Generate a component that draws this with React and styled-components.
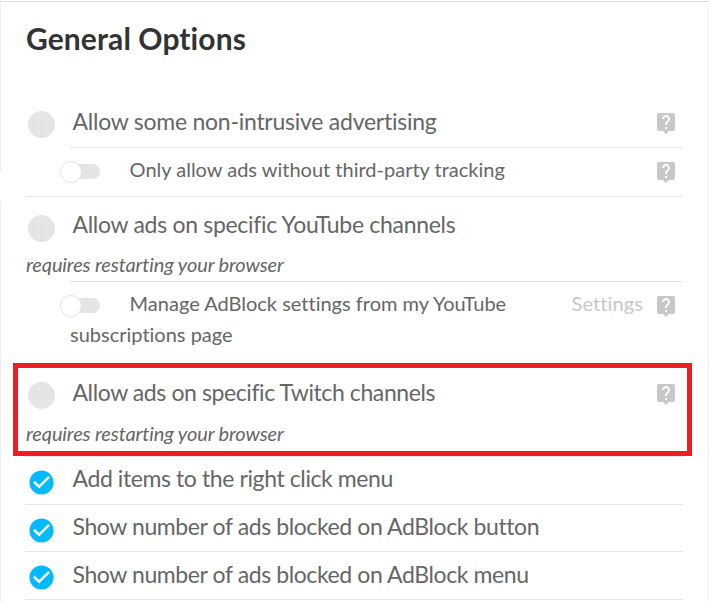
import { useState } from 'react';
import styled, { createGlobalStyle } from 'styled-components';
import { MdCheckCircle, MdLiveHelp } from 'react-icons/md';

const GlobalStyle = createGlobalStyle`
  * {
    box-sizing: border-box;
  }
  body {
    margin: 0;
    background-color: white;
    font-family: Lato, 'Liberation Sans', sans-serif;
    font-variant-ligatures: none;
    color: #666;
  }
`;

const Page = styled.div`
  display: grid;
  grid-template-columns: 1px 1fr 1px;
  width: 709px;
  height: 602px;
  overflow: hidden;
  padding-top: 1px;
`;
const Edge = styled.div`
  display: flex;
  flex-direction: column;
  gap: ${(props) => props.gap || 0};
`;
const EdgePart = styled.div`
  height: ${(props) => props.h || 'auto'};
  flex: ${(props) => (props.h ? 'none' : 1)};
  background-color: #efefef;
`;
const Panel = styled.main`
  border-top: 1px solid #dcdcdc;
  padding: 0 25px;
`;
const Title = styled.h1`
  margin: 0;
  padding-top: 14px;
  height: 95px;
  font-size: 30px;
  line-height: 44px;
  letter-spacing: 0.1px;
  font-weight: 700;
  color: #333;
  white-space: nowrap;
`;
const List = styled.ul`
  margin: 0;
  padding: 0;
  list-style: none;
  border-bottom: 1px solid #e5e5e5;
`;
const Item = styled.li`
  display: flex;
  align-items: flex-start;
  height: ${(props) => props.h};
  padding-top: ${(props) => props.top};
  margin-left: ${(props) => (props.sub ? '44px' : 0)};
  border-top: ${(props) => (props.noLine ? 'none' : '1px solid #e5e5e5')};
`;
const CheckBtn = styled.button`
  display: flex;
  align-items: center;
  justify-content: center;
  flex: none;
  width: 30px;
  height: 30px;
  margin: ${(props) => props.drop || '3px'} 16.5px 0 0;
  padding: 0;
  border: none;
  background: none;
  color: #00b9ff;
  cursor: pointer;
`;
const dots = `radial-gradient(circle at 1px 1px, #dedede 0.5px, transparent 0.9px) 0 0 / 4px 4px`;
const Blank = styled.span`
  width: 27px;
  height: 27px;
  border-radius: 50%;
  background: ${dots}, #e6e6e6;
`;
const Label = styled.div`
  flex: 1;
  font-size: 23px;
  line-height: 30px;
  letter-spacing: ${(props) => props.track || '-0.4px'};
  white-space: nowrap;
`;
const SubLabel = styled.div`
  flex: 1;
  font-size: 20px;
  line-height: 31px;
`;
const Note = styled.div`
  margin-left: -46.5px;
  padding-top: ${(props) => props.top};
  font-size: 20px;
  line-height: 30px;
  letter-spacing: -0.13px;
  font-style: italic;
`;
const Track = styled.button`
  display: inline-flex;
  align-items: center;
  vertical-align: top;
  width: 38px;
  height: 15px;
  margin: 10px 29.6px 0 -8px;
  padding: 0;
  border: none;
  border-radius: 8px;
  background: ${dots}, #e6e6e6;
  cursor: pointer;
`;
const Knob = styled.span`
  flex: none;
  width: 22px;
  height: 22px;
  margin-left: ${(props) => (props.on ? '18px' : '-2px')};
  border: 1px solid #e2e2e2;
  border-radius: 50%;
  background-color: white;
`;
const Settings = styled.span`
  margin-right: 11px;
  font-size: 20px;
  line-height: 31px;
  letter-spacing: 0.1px;
  color: #c8c8c8;
`;
const Help = styled(MdLiveHelp)`
  flex: none;
  width: 24px;
  height: 24px;
  margin: ${(props) => props.$drop || '5px'} 5px 0 0;
  color: #c8c8c8;
`;
// the marker frame is laid over the list and takes no clicks
const Marker = styled.div`
  position: absolute;
  left: 13px;
  top: 363px;
  width: 679px;
  height: 93px;
  border: 5px solid #ee1c25;
  pointer-events: none;
`;

function Check({ start, drop }) {
  let [on, setOn] = useState(start);
  return (
    <CheckBtn drop={drop} onClick={() => setOn(!on)}>
      {on ? <MdCheckCircle size={29} /> : <Blank />}
    </CheckBtn>
  );
}

function Toggle() {
  let [on, setOn] = useState(false);
  return (
    <Track onClick={() => setOn(!on)}>
      <Knob on={on ? 1 : undefined} />
    </Track>
  );
}

const menuItems = [
  { text: 'Add items to the right click menu', h: '48px', top: '6px' },
  { text: 'Show number of ads blocked on AdBlock button', h: '47px', top: '6px' },
  { text: 'Show number of ads blocked on AdBlock menu', h: '48px', top: '7px' },
];

function App() {
  return (
    <>
      <GlobalStyle />
      <Page>
        <Edge gap="29px">
          <EdgePart h="171px" />
          <EdgePart />
        </Edge>
        <Panel>
          <Title>General Options</Title>
          <List>
            <Item noLine h="50px" top="9px">
              <Check />
              <Label track="-0.25px">Allow some non-intrusive advertising</Label>
              <Help />
            </Item>
            <Item sub h="49px" top="6px">
              <SubLabel>
                <Toggle />
                Only allow ads without third-party tracking
              </SubLabel>
              <Help $drop="6px" />
            </Item>
            <Item h="85px" top="12px">
              <Check drop="4px" />
              <Label track="-0.3px">
                Allow ads on specific YouTube channels
                <Note top="10px">requires restarting your browser</Note>
              </Label>
            </Item>
            <Item sub h="85px" top="6px">
              <SubLabel>
                <Toggle />
                Manage AdBlock settings from my YouTube subscriptions page
              </SubLabel>
              <Settings>Settings</Settings>
              <Help $drop="6px" />
            </Item>
            <Item noLine h="90px" top="11px">
              <Check />
              <Label>
                Allow ads on specific Twitch channels
                <Note top="11px">requires restarting your browser</Note>
              </Label>
              <Help />
            </Item>
            {menuItems.map((a, i) => {
              return (
                <Item key={i} h={a.h} top={a.top}>
                  <Check start={true} drop={i == 2 ? '3px' : '4px'} />
                  <Label>{a.text}</Label>
                </Item>
              );
            })}
          </List>
        </Panel>
        <Edge>
          <EdgePart />
        </Edge>
      </Page>
      <Marker />
    </>
  );
}

export default App;
